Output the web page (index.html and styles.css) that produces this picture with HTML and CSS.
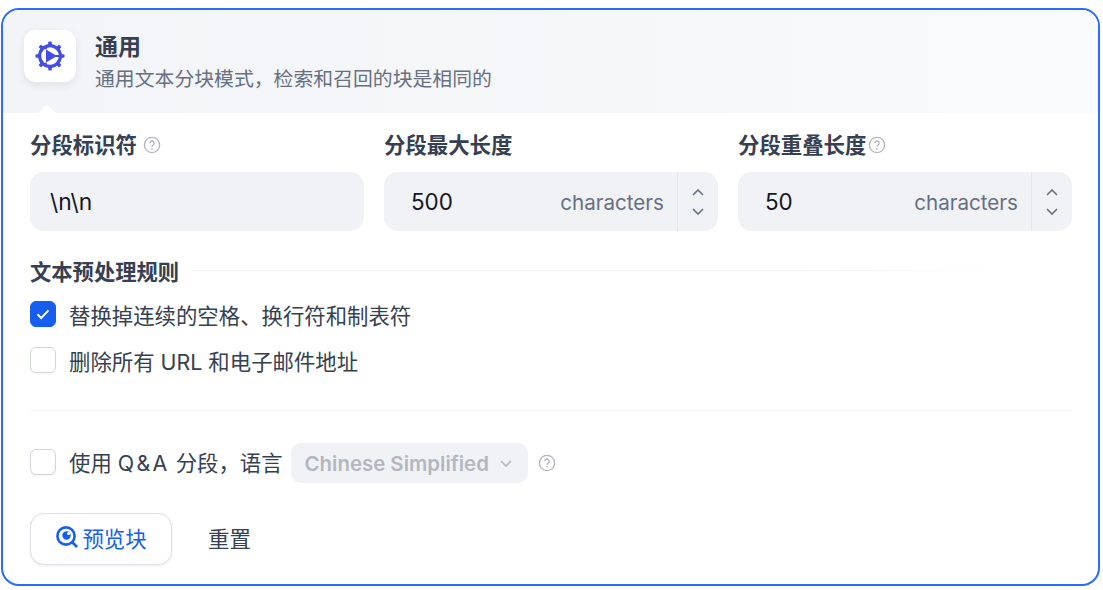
FILE: index.html
```html
<!DOCTYPE html>
<html lang="zh-CN">
  <head>
    <meta charset="UTF-8" />
    <title>通用</title>
    <link rel="stylesheet" href="styles.css">
  </head>
  <body>
    <div class="card">
      <div class="card-head">
        <div class="head-icon">
          <svg width="30" height="30" viewBox="0 0 30 30">
            <g fill="#444ce7">
              <rect x="13.2" y="0.5" width="3.6" height="4.5" rx="1"/>
              <rect x="13.2" y="25" width="3.6" height="4.5" rx="1"/>
              <rect x="0.5" y="13.2" width="4.5" height="3.6" rx="1"/>
              <rect x="25" y="13.2" width="4.5" height="3.6" rx="1"/>
              <rect x="13.2" y="0.5" width="3.6" height="4.5" rx="1" transform="rotate(45 15 15)"/>
              <rect x="13.2" y="0.5" width="3.6" height="4.5" rx="1" transform="rotate(135 15 15)"/>
              <rect x="13.2" y="0.5" width="3.6" height="4.5" rx="1" transform="rotate(225 15 15)"/>
              <rect x="13.2" y="0.5" width="3.6" height="4.5" rx="1" transform="rotate(315 15 15)"/>
            </g>
            <circle cx="15" cy="15" r="10.4" fill="none" stroke="#444ce7" stroke-width="3.2"/>
            <path d="M11 8.5 22 15 11 21.5Z" fill="#444ce7"/>
            <path d="M21 15h4M11.5 8 9 5.5M11.5 22 9 24.5" stroke="#444ce7" stroke-width="1.8"/>
          </svg>
        </div>
        <div class="head-text">
          <div class="head-title">通用</div>
          <div class="head-desc">通用文本分块模式，检索和召回的块是相同的</div>
        </div>
      </div>

      <div class="card-body">
        <div class="fields">
          <div class="field">
            <div class="field-label">分段标识符
              <svg class="help" width="18" height="18" viewBox="0 0 18 18"><circle cx="9" cy="9" r="7.6" fill="none" stroke="#b4b7bf" stroke-width="1.4"/><path d="M6.8 7.2a2.2 2.2 0 1 1 3.3 1.9c-.7.4-1.1.8-1.1 1.6" fill="none" stroke="#b4b7bf" stroke-width="1.4"/><circle cx="9" cy="12.8" r=".9" fill="#b4b7bf"/></svg>
            </div>
            <div class="input input-plain">\n\n</div>
          </div>
          <div class="field">
            <div class="field-label">分段最大长度</div>
            <div class="input">
              <span class="input-value">500</span>
              <span class="input-unit">characters</span>
              <span class="stepper">
                <svg width="14" height="7" viewBox="0 0 14 7"><path d="M2 6 7 1l5 5" fill="none" stroke="#676f83" stroke-width="1.6"/></svg>
                <svg width="14" height="7" viewBox="0 0 14 7"><path d="M2 1l5 5 5-5" fill="none" stroke="#676f83" stroke-width="1.6"/></svg>
              </span>
            </div>
          </div>
          <div class="field">
            <div class="field-label">分段重叠长度
              <svg class="help help-tight" width="18" height="18" viewBox="0 0 18 18"><circle cx="9" cy="9" r="7.6" fill="none" stroke="#b4b7bf" stroke-width="1.4"/><path d="M6.8 7.2a2.2 2.2 0 1 1 3.3 1.9c-.7.4-1.1.8-1.1 1.6" fill="none" stroke="#b4b7bf" stroke-width="1.4"/><circle cx="9" cy="12.8" r=".9" fill="#b4b7bf"/></svg>
            </div>
            <div class="input">
              <span class="input-value">50</span>
              <span class="input-unit">characters</span>
              <span class="stepper">
                <svg width="14" height="7" viewBox="0 0 14 7"><path d="M2 6 7 1l5 5" fill="none" stroke="#676f83" stroke-width="1.6"/></svg>
                <svg width="14" height="7" viewBox="0 0 14 7"><path d="M2 1l5 5 5-5" fill="none" stroke="#676f83" stroke-width="1.6"/></svg>
              </span>
            </div>
          </div>
        </div>

        <div class="rules-title">
          <span>文本预处理规则</span>
          <div class="rules-line"></div>
        </div>
        <div class="check-row">
          <span class="check check-on">
            <svg width="18" height="18" viewBox="0 0 18 18"><path d="M3.5 9.3 7.2 13l7.3-7.6" fill="none" stroke="#fff" stroke-width="2"/></svg>
          </span>
          替换掉连续的空格、换行符和制表符
        </div>
        <div class="check-row check-row-second">
          <span class="check"></span>
          删除所有 URL 和电子邮件地址
        </div>

        <div class="divider"></div>

        <div class="qa-row">
          <span class="check"></span>
          <span class="qa-label">使用 <span class="qa-latin">Q&amp;A</span> 分段，语言</span>
          <div class="lang-select">
            Chinese Simplified
            <svg width="16" height="16" viewBox="0 0 16 16"><path d="M3 6l5 5 5-5" fill="none" stroke="#b4b7bf" stroke-width="1.6"/></svg>
          </div>
          <svg class="help" width="18" height="18" viewBox="0 0 18 18"><circle cx="9" cy="9" r="7.6" fill="none" stroke="#b4b7bf" stroke-width="1.4"/><path d="M6.8 7.2a2.2 2.2 0 1 1 3.3 1.9c-.7.4-1.1.8-1.1 1.6" fill="none" stroke="#b4b7bf" stroke-width="1.4"/><circle cx="9" cy="12.8" r=".9" fill="#b4b7bf"/></svg>
        </div>

        <div class="actions">
          <button class="btn-preview">
            <svg width="24" height="24" viewBox="0 0 24 24"><circle cx="11" cy="11" r="8.6" fill="none" stroke="#155eef" stroke-width="2.6"/><circle cx="11.5" cy="10.5" r="4.2" fill="#155eef"/><circle cx="13.6" cy="8.6" r="1.5" fill="#fff"/><path d="M17 17l5 5" stroke="#155eef" stroke-width="2.6"/></svg>
            预览块
          </button>
          <button class="btn-reset">重置</button>
        </div>
      </div>
    </div>
  </body>
</html>
```

FILE: styles.css
```css
body {
  margin: 0;
  padding: 8px 3px 0 1px;
  background: #fff;
  font-family: Inter, "Noto Sans CJK SC", sans-serif;
  color: #354052;
  overflow: hidden;
}

.card {
  height: 578px;
  box-sizing: border-box;
  border: 2px solid #296dff;
  border-radius: 18px;
  overflow: hidden;
}

.card-head {
  display: flex;
  height: 103px;
  box-sizing: border-box;
  padding: 20px 21px 0;
  gap: 19px;
  background: linear-gradient(90deg, #f2f4f7, #f9fafb);
  position: relative;
}

/* small notch under the icon */
.card-head::after {
  content: "";
  position: absolute;
  left: 37px;
  bottom: -1px;
  width: 14px;
  height: 14px;
  background: #fff;
  transform: rotate(45deg) translate(5px, 5px);
  border-radius: 2px;
}

.head-icon {
  width: 52px;
  height: 52px;
  display: flex;
  align-items: center;
  justify-content: center;
  background: #fff;
  border-radius: 12px;
  box-shadow: 0 3px 8px rgba(16, 24, 40, 0.08);
}

.head-title {
  margin-top: 1px;
  font-size: 23px;
  line-height: 33px;
  font-weight: 600;
}

.head-desc {
  font-size: 19.85px;
  line-height: 29px;
  margin-top: 1px;
  color: #676f83;
}

.card-body {
  padding: 16px 26px 0 27px;
}

.fields {
  display: grid;
  grid-template-columns: repeat(3, 334px);
  gap: 20px;
}

.field-label {
  display: flex;
  align-items: flex-start;
  height: 34px;
  margin-bottom: 9px;
  font-size: 21.4px;
  line-height: 32px;
  font-weight: 600;
}

.help {
  margin-left: 6px;
  flex-shrink: 0;
}

.field-label .help {
  margin-top: 7px;
}

.field-label .help-tight {
  margin-left: 2px;
}

.input {
  display: flex;
  align-items: center;
  height: 59px;
  box-sizing: border-box;
  background: #f1f2f6;
  border-radius: 14px;
  overflow: hidden;
  font-size: 22.8px;
  color: #101828;
}

.input-plain {
  padding-left: 20px;
}

.input-value {
  flex: 1;
  padding-left: 27px;
  font-size: 22.4px;
}

.input-unit {
  margin-right: 13px;
  padding-top: 1px;
  font-size: 20.6px;
  color: #676f83;
}

.stepper {
  display: flex;
  flex-direction: column;
  align-items: center;
  justify-content: center;
  gap: 12px;
  width: 40px;
  height: 100%;
  border-left: 1px solid #e5e7eb;
}

.rules-title {
  display: flex;
  align-items: center;
  gap: 14px;
  margin-top: 23px;
  height: 32px;
  font-size: 21.3px;
  font-weight: 600;
}

.rules-line {
  flex: 1;
  height: 1px;
  margin-top: 1px;
  margin-right: 60px;
  background: linear-gradient(90deg, #f0f1f3 75%, #fff);
}

.check-row {
  display: flex;
  align-items: center;
  gap: 13px;
  height: 26px;
  margin-top: 15px;
  font-size: 21.4px;
}

.check-row-second {
  margin-top: 20px;
}

.check {
  width: 26px;
  height: 26px;
  box-sizing: border-box;
  flex-shrink: 0;
  border: 1.5px solid #d0d5dc;
  border-radius: 6px;
  background: #fff;
  box-shadow: 0 1px 2px rgba(16, 24, 40, 0.05);
  display: flex;
  align-items: center;
  justify-content: center;
}

.check-on {
  background: #155eef;
  border-color: #155eef;
}

.divider {
  height: 1px;
  margin-top: 37px;
  background: #f2f4f7;
}

.qa-row {
  display: flex;
  align-items: center;
  height: 40px;
  margin-top: 32px;
}

.qa-row .check {
  margin-bottom: 3px;
}

.qa-label {
  margin-left: 13px;
  margin-bottom: 4px;
  font-size: 21.4px;
}

.qa-latin {
  letter-spacing: 2.3px;
}

.lang-select {
  display: flex;
  align-items: center;
  justify-content: space-between;
  width: 237px;
  height: 40px;
  box-sizing: border-box;
  margin-left: 8px;
  padding: 0 14px;
  background: #f1f2f6;
  border-radius: 10px;
  font-size: 20.4px;
  font-weight: 600;
  color: #b4b7bf;
}

.qa-row .help {
  margin-left: 10px;
}

.actions {
  display: flex;
  align-items: center;
  margin-top: 30px;
}

.btn-preview {
  display: flex;
  align-items: center;
  justify-content: center;
  gap: 3px;
  width: 142px;
  height: 52px;
  padding: 0 0 4px;
  background: #fff;
  border: 1.5px solid #dcdfe4;
  border-radius: 14px;
  box-shadow: 0 1px 3px rgba(16, 24, 40, 0.08);
  font-family: inherit;
  font-size: 21.4px;
  color: #155eef;
}

.btn-reset {
  margin-left: 36px;
  padding: 0 0 4px;
  background: none;
  border: none;
  font-family: inherit;
  font-size: 21.4px;
  color: #354052;
}
```
